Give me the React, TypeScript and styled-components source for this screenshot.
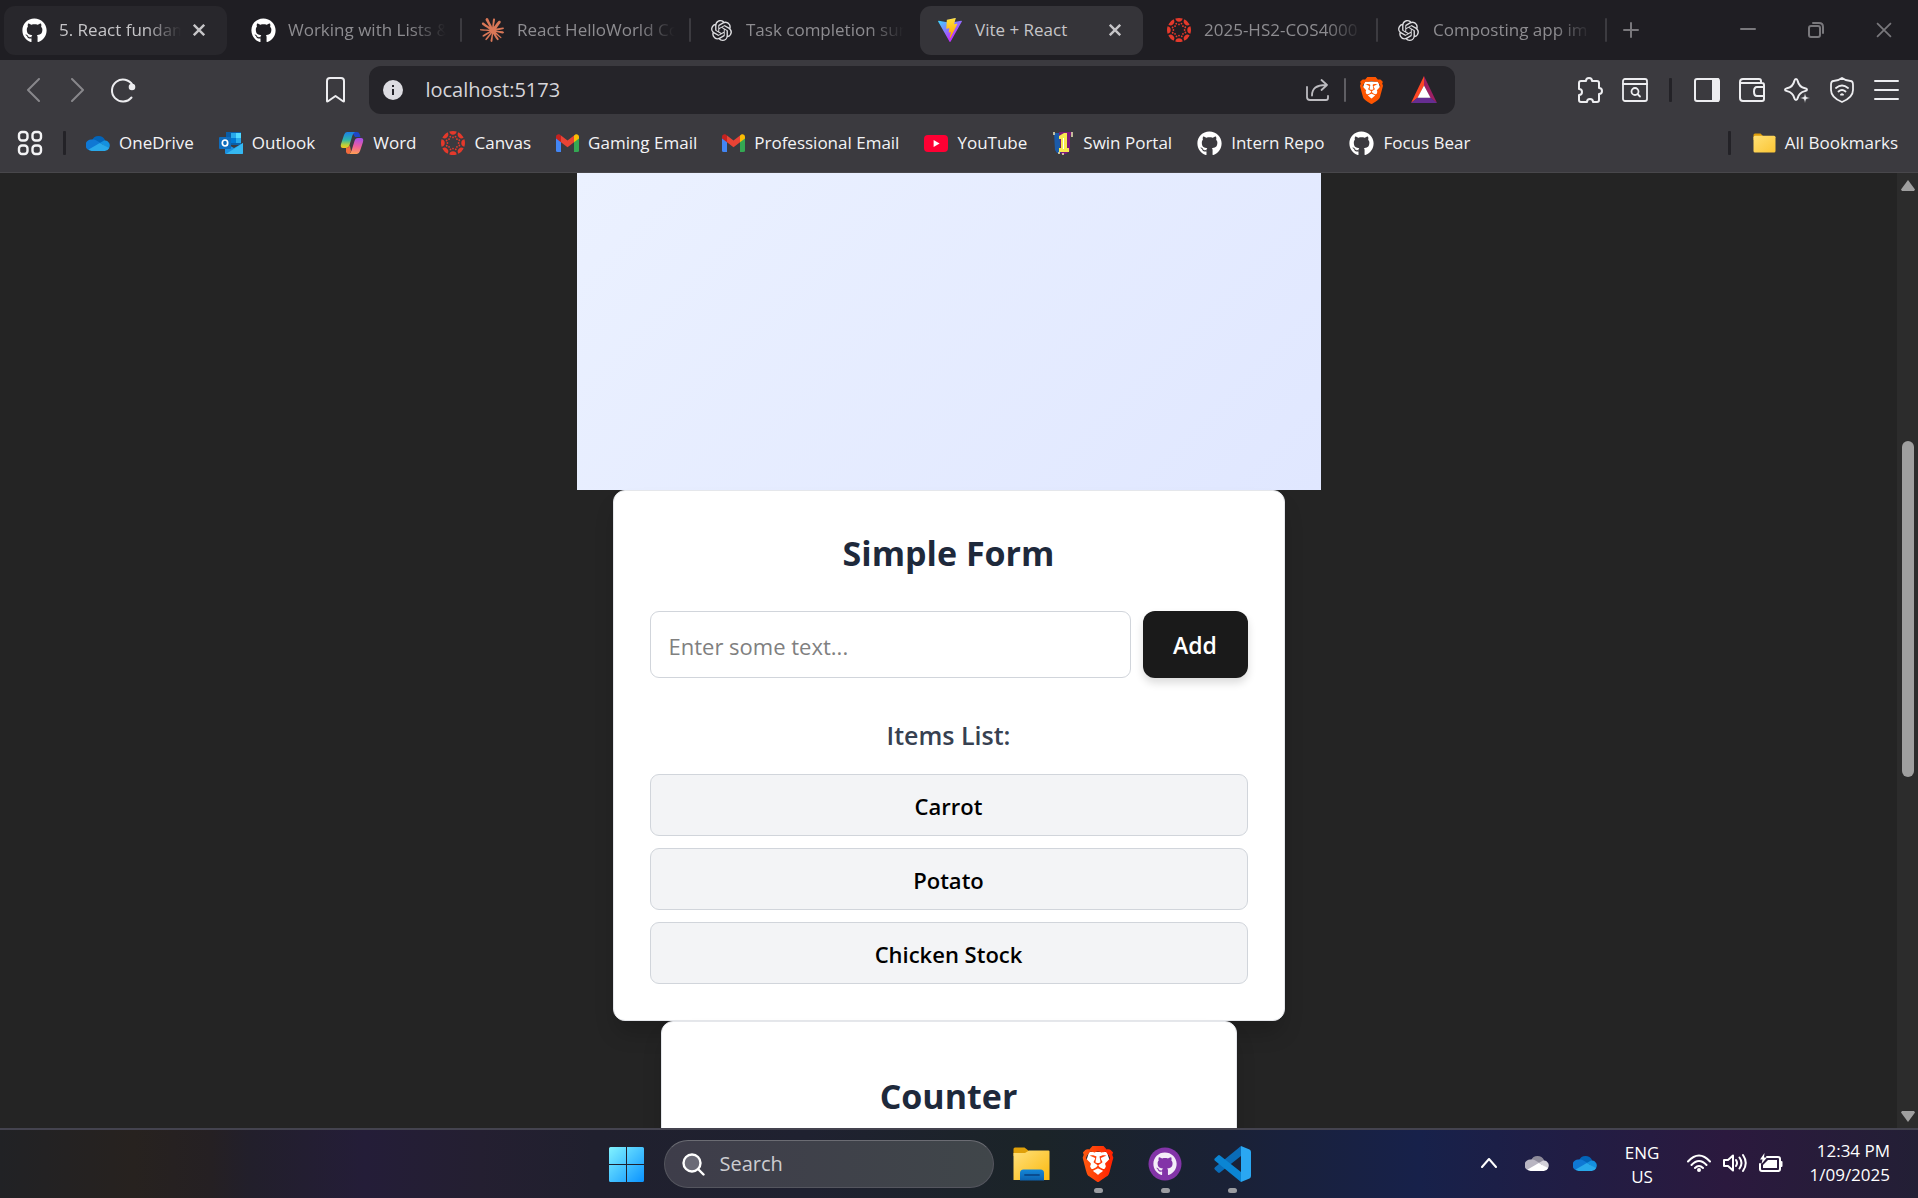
import React, { useState } from "react";
import styled, { createGlobalStyle, css } from "styled-components";
import { FaGithub } from "react-icons/fa";
import { SiBrave, SiClaude, SiOpenai } from "react-icons/si";

const ui = `"Open Sans", "Noto Sans", sans-serif`;

const GlobalStyle = createGlobalStyle`
  *, *::before, *::after { box-sizing: border-box; }
  html, body { margin: 0; height: 100%; }
  #root { height: 100%; }
  body { background: #242424; font-family: ${ui}; overflow: hidden; }
  button, input { font-family: inherit; }
  h1, h2, ul, p { margin: 0; padding: 0; }
  svg { display: block; flex: none; }
`;

/* ---------- layout ---------- */

const Screen = styled.div`
  display: flex;
  flex-direction: column;
  height: 100vh;
`;

const plainButton = css`
  display: flex;
  align-items: center;
  justify-content: center;
  padding: 0;
  border: 0;
  background: none;
  color: inherit;
`;

const TabStrip = styled.header`
  display: flex;
  flex: none;
  height: 60px;
  padding-left: 4px;
  background: #1f1e23;
  color: #79787c;
`;

const Tabs = styled.nav`
  display: flex;
  flex: 0 1 1603px;
  min-width: 0;
`;

const TabCell = styled.div`
  display: flex;
  flex: 1 1 0;
  align-items: center;
  gap: 4px;
  min-width: 0;
`;

const Pill = styled.div<{ $tone: "idle" | "hover" | "active" }>`
  display: flex;
  flex: 1;
  align-items: center;
  min-width: 0;
  height: 49px;
  padding: 0 10px 0 18px;
  border-radius: 11px;
  background: ${(p) => (p.$tone === "active" ? "#353439" : p.$tone === "hover" ? "#28272c" : "transparent")};
  color: ${(p) => (p.$tone === "idle" ? "#8d8c90" : "#c6c5c8")};
`;

const TabIcon = styled.span`
  display: flex;
  flex: none;
  justify-content: center;
  width: 24px;
`;

const TabTitle = styled.a<{ $fade: boolean }>`
  flex: 1;
  min-width: 0;
  margin-left: 13px;
  overflow: hidden;
  color: inherit;
  font-size: 17px;
  line-height: 26px;
  text-decoration: none;
  white-space: nowrap;
  ${(p) => p.$fade && css`mask-image: linear-gradient(to right, #000 calc(100% - 36px), transparent);`}
`;

const CloseTab = styled.button`
  ${plainButton}
  flex: none;
  width: 36px;
  height: 36px;
`;

const Divider = styled.span<{ $color: string; $width?: number }>`
  flex: none;
  width: ${(p) => p.$width ?? 2}px;
  height: 24px;
  border-radius: 1px;
  background: ${(p) => p.$color};
`;

const NewTab = styled.button`
  ${plainButton}
  width: 48px;
`;

const WindowControls = styled.div`
  display: flex;
  margin-left: auto;
`;

const WindowButton = styled.button`
  ${plainButton}
  width: 68px;
`;

const Toolbar = styled.div`
  display: flex;
  flex: none;
  align-items: center;
  height: 60px;
  padding: 0 9px 0 10px;
  background: #3b3a3f;
  color: #ededf0;
`;

const ToolButton = styled.button<{ $dim?: boolean }>`
  ${plainButton}
  flex: none;
  width: 45px;
  height: 45px;
  color: ${(p) => (p.$dim ? "#88878b" : "#ededf0")};
`;

const Stretch = styled.span<{ $grow: number }>`
  flex: ${(p) => p.$grow} 1 0;
`;

const ToolDivider = styled.span`
  display: flex;
  justify-content: center;
  width: 27px;
`;

const AddressBar = styled.form`
  display: flex;
  flex: 1083 1 0;
  align-items: center;
  min-width: 0;
  height: 48px;
  margin-left: 11px;
  padding: 0 5px 0 14px;
  border-radius: 12px;
  background: #252429;
`;

const AddressInput = styled.input`
  flex: 1;
  min-width: 0;
  margin-left: 22px;
  padding: 0;
  border: 0;
  outline: 0;
  background: none;
  color: #d6d5d9;
  font-size: 20px;
  line-height: 28px;
`;

const AddressButton = styled.button`
  ${plainButton}
  flex: none;
  width: 52px;
  height: 48px;
  color: #bdbcc0;
`;

const BookmarkBar = styled.nav`
  display: flex;
  flex: none;
  align-items: center;
  gap: 20px;
  height: 53px;
  padding: 0 20px 6px 17px;
  border-bottom: 1px solid #48474b;
  background: #3b3a3f;
  color: #f3f3f5;
`;

const BookmarkList = styled.div`
  display: flex;
  gap: 25px;
`;

const AppsButton = styled.button`
  ${plainButton}
  width: 26px;
  height: 26px;
`;

const Bookmark = styled.a`
  display: flex;
  align-items: center;
  gap: 9px;
  color: inherit;
  font-size: 17px;
  line-height: 26px;
  text-decoration: none;
  white-space: nowrap;
`;

const PushRight = styled.div`
  display: flex;
  align-items: center;
  gap: 22px;
  margin-left: auto;
`;

/* ---------- page ---------- */

const Viewport = styled.div`
  display: flex;
  flex: 1;
  min-height: 0;
  background: #242424;
`;

const Page = styled.main`
  display: flex;
  flex: 1;
  flex-direction: column;
  align-items: center;
  min-width: 0;
  overflow: hidden;
`;

const Hero = styled.section`
  flex: none;
  width: 100%;
  max-width: 744px;
  height: 317px;
  background: linear-gradient(135deg, #ebf1ff, #e0e7ff);
`;

const Card = styled.section<{ $max: number; $pad: number }>`
  flex: none;
  width: 100%;
  max-width: ${(p) => p.$max}px;
  padding: ${(p) => p.$pad}px 36px 36px;
  border: 1px solid #e5e7eb;
  border-radius: 12px;
  background: #fff;
  box-shadow: 0 15px 22px -4px rgba(0, 0, 0, 0.2);
  text-align: center;
`;

const CardTitle = styled.h1`
  padding-top: 4px;
  color: #1e293b;
  font-size: 34px;
  font-weight: 700;
  line-height: 44px;
`;

const EntryForm = styled.form`
  display: flex;
  gap: 12px;
  margin: 36px 0;
`;

const EntryInput = styled.input`
  flex: 1;
  min-width: 0;
  height: 67px;
  padding: 2px 18px 0;
  border: 1px solid #d1d5db;
  border-radius: 9px;
  outline: 0;
  background: #fff;
  color: #000;
  font-size: 22px;
  &::placeholder { color: #808080; opacity: 1; }
`;

const AddButton = styled.button`
  width: 105px;
  height: 67px;
  padding: 0;
  border: 0;
  border-radius: 12px;
  background: #1a1a1a;
  box-shadow: 0 5px 8px rgba(0, 0, 0, 0.14);
  color: #fff;
  font-size: 23px;
  font-weight: 600;
`;

const ListTitle = styled.h2`
  margin-bottom: 18px;
  color: #374151;
  font-size: 25px;
  font-weight: 600;
  line-height: 42px;
`;

const Items = styled.ul`
  display: flex;
  flex-direction: column;
  gap: 12px;
  list-style: none;
`;

const Item = styled.li`
  padding: 13px 12px 11px;
  border: 1px solid #d1d5db;
  border-radius: 9px;
  background: #f3f4f6;
  color: #000;
  font-size: 22px;
  font-weight: 600;
  line-height: 36px;
`;

const ScrollTrack = styled.div`
  display: flex;
  flex: none;
  flex-direction: column;
  align-items: center;
  width: 21px;
  background: #2c2c2c;
  color: #9f9f9f;
`;

const ScrollArrow = styled.button`
  ${plainButton}
  width: 21px;
  height: 24px;
`;

const Thumb = styled.span`
  flex: 337 1 0;
  width: 12px;
  border-radius: 6px;
  background: #9f9f9f;
`;

/* ---------- taskbar ---------- */

const Taskbar = styled.footer`
  display: grid;
  flex: none;
  grid-template-columns: 1fr auto 1fr;
  height: 70px;
  border-top: 2px solid #44434f;
  background: linear-gradient(
    to right,
    #212225 0%,
    #27221f 7%,
    #252023 11%,
    #221f2b 13%,
    #241d38 19%,
    #241f31 25%,
    #20202e 31%,
    #1f2130 42%,
    #1b2428 54%,
    #1a2136 64%,
    #17214a 74%,
    #2b193e 90%,
    #231f35 100%
  );
  color: #fff;
`;

const Dock = styled.div`
  display: flex;
  grid-column: 2;
  align-items: center;
  padding-right: 60px;
`;

const DockButton = styled.button<{ $open?: boolean }>`
  ${plainButton}
  position: relative;
  width: 67px;
  height: 68px;
  ${(p) =>
    p.$open &&
    css`
      &::after {
        content: "";
        position: absolute;
        bottom: 5px;
        width: 9px;
        height: 5px;
        border-radius: 3px;
        background: #9b9ca1;
      }
    `}
`;

const SearchBox = styled.label`
  display: flex;
  align-items: center;
  gap: 15px;
  width: 330px;
  height: 48px;
  margin: 0 4px;
  padding: 0 17px;
  border: 1px solid #55565f;
  border-top-color: #6b6c73;
  border-radius: 24px;
  background: linear-gradient(to right, #3e3d4a, #40464a);
`;

const SearchInput = styled.input`
  flex: 1;
  min-width: 0;
  padding: 0;
  border: 0;
  outline: 0;
  background: none;
  color: #fff;
  font-size: 20px;
  line-height: 28px;
  &::placeholder { color: #cccdd1; opacity: 1; }
`;

const Tray = styled.div`
  display: flex;
  align-items: center;
  justify-content: flex-end;
  padding: 0 28px 2px 0;
  font-size: 17px;
  line-height: 24px;
`;

const TrayButton = styled.button<{ $width: number }>`
  ${plainButton}
  width: ${(p) => p.$width}px;
  height: 48px;
`;

const Language = styled.div`
  width: 72px;
  padding: 3px 6px 0 0;
  text-align: center;
`;

const Clock = styled.time`
  width: 101px;
  text-align: right;
`;

/* ---------- drawings ---------- */

const Close = ({ size = 12, weight = 2.4 }) => (
  <svg width={size} height={size} viewBox="0 0 12 12" fill="none" stroke="currentColor" strokeWidth={weight}>
    <path d="M.8.8l10.4 10.4M11.2.8L.8 11.2" />
  </svg>
);

const ViteLogo = () => (
  <svg width="24" height="24" viewBox="0 0 256 257">
    <defs>
      <linearGradient id="va" x1="-.8%" x2="57.6%" y1="7.7%" y2="78.4%">
        <stop offset="0%" stopColor="#41D1FF" />
        <stop offset="100%" stopColor="#BD34FE" />
      </linearGradient>
      <linearGradient id="vb" x1="43.4%" x2="50.3%" y1="2.2%" y2="89%">
        <stop offset="0%" stopColor="#FFEA83" />
        <stop offset="8.3%" stopColor="#FFDD35" />
        <stop offset="100%" stopColor="#FFA800" />
      </linearGradient>
    </defs>
    <path fill="url(#va)" d="M255.153 37.938L134.897 252.976c-2.483 4.44-8.862 4.466-11.382.048L.875 37.958c-2.746-4.814 1.371-10.646 6.827-9.67l120.385 21.517a6.537 6.537 0 0 0 2.322-.004l117.867-21.483c5.438-.991 9.574 4.796 6.877 9.62Z" />
    <path fill="url(#vb)" d="M185.432.063L96.44 17.501a3.268 3.268 0 0 0-2.634 3.014l-5.474 92.456a3.268 3.268 0 0 0 3.997 3.378l24.777-5.718c2.318-.535 4.413 1.507 3.936 3.838l-7.361 36.047c-.495 2.426 1.782 4.5 4.151 3.78l15.304-4.649c2.372-.72 4.652 1.36 4.15 3.788l-11.698 56.621c-.732 3.542 3.979 5.473 5.943 2.437l1.313-2.028l72.516-144.72c1.215-2.423-.88-5.186-3.54-4.672l-25.505 4.922c-2.396.462-4.435-1.77-3.759-4.114l16.646-57.705c.677-2.35-1.37-4.583-3.769-4.113Z" />
  </svg>
);

const CanvasLogo = () => (
  <svg width="24" height="24" viewBox="0 0 24 24" fill="#e4392b">
    {[0, 45, 90, 135, 180, 225, 270, 315].map((a) => (
      <g key={a} transform={`rotate(${a} 12 12)`}>
        <path d="M8.300.6A12 12 0 0 1 15.700.6A3.750 3.750 0 0 1 8.300.6Z" />
        <circle cx="12" cy="6.400" r=".9" />
        <circle cx="14.500" cy="5.600" r=".9" />
      </g>
    ))}
  </svg>
);

const Cloud = ({ back, left, right, front }: { back: string; left: string; right: string; front: string }) => (
  <svg width="24" height="16" viewBox="0 0 24 16">
    <path fill={back} d="M6 5.2A7.2 7.2 0 0 1 19 5l-5 5z" />
    <path fill={left} d="M6.2 4.6a5.6 5.6 0 0 1 4.2.8l5 3L4 15.500A5.500 5.500 0 0 1 6.200 4.600z" />
    <path fill={right} d="M18.500 5.200A5.300 5.300 0 0 1 22.800 13.500l-9-5.600z" />
    <path fill={front} d="M2.600 14.600L13.800 8l9.400 5A5 5 0 0 1 18.800 16H5.600a5 5 0 0 1-3-1.400z" />
  </svg>
);

const BlueCloud = () => <Cloud back="#0364b8" left="#0f78d4" right="#1490df" front="#28a8ea" />;
const GreyCloud = () => <Cloud back="#8d8a99" left="#b9b6c2" right="#d3d1d9" front="#ffffff" />;

const OutlookLogo = () => (
  <svg width="24" height="22" viewBox="0 0 24 22">
    <rect x="7" y="0" width="15" height="13" fill="#0a5ea8" />
    <rect x="12" y="1" width="5" height="5" fill="#28a8ea" />
    <rect x="17" y="1" width="5" height="5" fill="#50d9ff" />
    <rect x="12" y="6" width="5" height="5" fill="#0078d4" />
    <rect x="17" y="6" width="5" height="5" fill="#28a8ea" />
    <path d="M6 11l9 5 9-5v10a1 1 0 0 1-1 1H7a1 1 0 0 1-1-1z" fill="#1a8fe0" />
    <path d="M24 11L7 22h16a1 1 0 0 0 1-1z" fill="#35b8f1" />
    <rect x="0" y="5" width="12" height="12" rx="1" fill="#0f6cbd" />
    <ellipse cx="6" cy="11" rx="2.700" ry="3" fill="none" stroke="#fff" strokeWidth="1.700" />
  </svg>
);

const CopilotLogo = () => (
  <svg width="24" height="22" viewBox="0 0 24 22">
    <defs>
      <linearGradient id="ca" x1="0" y1="0" x2="0" y2="1">
        <stop offset="0" stopColor="#1a7fe8" />
        <stop offset=".5" stopColor="#2fb6a8" />
        <stop offset=".8" stopColor="#b9cf3a" />
        <stop offset="1" stopColor="#f4c520" />
      </linearGradient>
      <linearGradient id="cb" x1=".4" y1="0" x2=".3" y2="1">
        <stop offset="0" stopColor="#a94fe8" />
        <stop offset=".5" stopColor="#ee5f9c" />
        <stop offset="1" stopColor="#ffa052" />
      </linearGradient>
    </defs>
    <path d="M12 0h5q2 0 2.600 2L20.500 5H15z" fill="#1e46c8" />
    <path d="M7 0H15q-2 1-2.600 3.500L9.500 13Q8.800 16 6 16H3Q0 16 1 12L4 3Q5 0 7 0z" fill="url(#ca)" />
    <path d="M6 16q3 0 3.800-3L11 19q-.6 3-2.500 3Q6.500 22 6 20z" fill="#f26a3c" />
    <path d="M17 22H8.800q2-.8 2.800-3.500L14.500 9Q15.300 6 18 6h3q3 0 2 4l-3 9q-1 3-3 3z" fill="url(#cb)" />
  </svg>
);

const GmailLogo = () => (
  <svg width="23" height="18" viewBox="0 0 23 18">
    <path d="M0 3v13.500Q0 18 1.500 18H5V7z" fill="#4285f4" />
    <path d="M23 3v13.500q0 1.500-1.500 1.500H18V7z" fill="#34a853" />
    <path d="M5 1.500V8.200l6.500 5 6.500-5V1.500l-6.500 5z" fill="#ea4335" />
    <path d="M0 3v1.600l5 3.600V1.500L4 .700C2.400-.500 0 .600 0 3z" fill="#c5221f" />
    <path d="M23 3v1.600l-5 3.600V1.500l1-.8c1.600-1.200 4-.1 4 2.300z" fill="#fbbc04" />
  </svg>
);

const YouTubeLogo = () => (
  <svg width="24" height="17" viewBox="0 0 24 17">
    <rect width="24" height="17" rx="4" fill="#ff0033" />
    <path d="M9.600 5l6 3.500-6 3.500z" fill="#fff" />
  </svg>
);

const SwinLogo = () => (
  <svg width="22" height="24" viewBox="0 0 20 24">
    <path d="M1 2h6v18l2 2H4l-2-3z" fill="#1b5ba8" />
    <path d="M6 1h13l-2 5v14l-4 3H8z" fill="#7d1a7c" />
    <path d="M6 5l5-3h3v15h2v4H6v-4h2V8H6z" fill="#f9e94e" />
    <path d="M10 7h1v11h-1z" fill="#fff" />
    <path d="M1 1v3M19 1v5M5 22h2M9 23h2" stroke="#efe6b8" strokeWidth="1.500" />
  </svg>
);

const FolderIcon = () => (
  <svg width="23" height="20" viewBox="0 0 23 20">
    <defs>
      <linearGradient id="fd" x1="0" y1="0" x2="1" y2="1">
        <stop offset="0" stopColor="#ffe074" />
        <stop offset="1" stopColor="#fbc534" />
      </linearGradient>
    </defs>
    <path d="M.5 2Q.5.500 2 .500h5.500L10 3v4H.5z" fill="#dd9c0a" />
    <rect x=".5" y="2.800" width="22" height="16.700" rx="1.500" fill="url(#fd)" />
  </svg>
);

const BraveLogo = ({ size, from, to }: { size: number; from: string; to: string }) => (
  <svg width={size} height={size} viewBox="0 0 24 24">
    <defs>
      <linearGradient id={`br${size}`}>
        <stop offset="0" stopColor={from} />
        <stop offset="1" stopColor={to} />
      </linearGradient>
    </defs>
    <path d="M6 4h12l1.500 5L16 17l-4 4-4-4-3.500-8z" fill="#fff" />
    <SiBrave size={24} fill={`url(#br${size})`} />
  </svg>
);

const BatLogo = () => (
  <svg width="26" height="28" viewBox="0 0 26 28">
    <path d="M13 0L0 27l6.500-5L13 9.500z" fill="#ff4724" />
    <path d="M13 0l13 27-6.500-5L13 9.500z" fill="#9e1f63" />
    <path d="M0 27h26l-6.500-5.500h-13z" fill="#662d91" />
    <path d="M13 9.500l6.500 12.300h-13z" fill="#fff" />
  </svg>
);

const Stroke = ({ w = 26, h = 26, sw = 2, children }: { w?: number; h?: number; sw?: number; children: React.ReactNode }) => (
  <svg width={w} height={h} viewBox={`0 0 ${w} ${h}`} fill="none" stroke="currentColor" strokeWidth={sw} strokeLinecap="round" strokeLinejoin="round">
    {children}
  </svg>
);

const WindowsLogo = () => (
  <svg width="35" height="35" viewBox="0 0 35 35">
    <defs>
      <linearGradient id="wn" gradientUnits="userSpaceOnUse" x1="0" y1="0" x2="35" y2="35">
        <stop offset="0" stopColor="#82f3ff" />
        <stop offset="1" stopColor="#0a93ff" />
      </linearGradient>
    </defs>
    <path fill="url(#wn)" d="M1.500 0H17v17H0V1.500Q0 0 1.500 0zM18 0h15.500Q35 0 35 1.500V17H18zM0 18h17v17H1.500Q0 35 0 33.500zM18 18h17v15.500q0 1.500-1.500 1.500H18z" />
  </svg>
);

const ExplorerLogo = () => (
  <svg width="37" height="34" viewBox="0 0 37 34">
    <defs>
      <linearGradient id="ex" x1="0" y1="0" x2="1" y2="1">
        <stop offset="0" stopColor="#ffe07a" />
        <stop offset="1" stopColor="#fbb90f" />
      </linearGradient>
      <linearGradient id="ey" x1="0" y1="0" x2="0" y2="1">
        <stop offset="0" stopColor="#1487d8" />
        <stop offset="1" stopColor="#0c63b0" />
      </linearGradient>
    </defs>
    <path d="M.5 2Q.5.500 2 .500h9.500L16 4v5H.5z" fill="#e0a008" />
    <path d="M.5 6H12l4-2.500h19.500q1 0 1 1V33H.5z" fill="url(#ex)" />
    <path d="M7 33.500V26q0-3.500 3.500-3.500h17Q31 22.500 31 26v7.500z" fill="url(#ey)" />
    <path d="M12 28h14" stroke="#0a4c8f" strokeWidth="1.800" strokeLinecap="round" />
  </svg>
);

const GitHubDesktopLogo = () => (
  <svg width="34" height="34" viewBox="0 0 34 34">
    <circle cx="17" cy="17" r="16.500" fill="#8334a8" />
    <g transform="translate(5 5)" color="#f4edf8">
      <FaGithub size={24} />
    </g>
  </svg>
);

const CodeLogo = () => (
  <svg width="37" height="36" viewBox="0 0 37 36">
    <path d="M27 0v10L6 26.500q-1 .8-2 0L1 23.800q-1.300-1.200 0-2.500z" fill="#0a6cb8" />
    <path d="M27 36V26L6 9.500q-1-.8-2 0L1 12.200q-1.300 1.200 0 2.500z" fill="#0b85d3" />
    <path d="M27 0l8.500 3.600Q37 4.300 37 6v24q0 1.700-1.500 2.400L27 36z" fill="#2aa7f2" />
  </svg>
);

/* ---------- data ---------- */

type TabInfo = { title: string; icon: React.ReactNode; tone?: "idle" | "hover" | "active"; divider?: boolean };

const github = <FaGithub size={25} color="#fff" />;
const openai = <SiOpenai size={21} color="#dddde0" />;

const tabs: TabInfo[] = [
  { title: "5. React fundam", icon: github, tone: "hover" },
  { title: "Working with Lists &", icon: github, divider: true },
  { title: "React HelloWorld Co", icon: <SiClaude size={24} color="#d97757" />, divider: true },
  { title: "Task completion sum", icon: openai },
  { title: "Vite + React", icon: <ViteLogo />, tone: "active" },
  { title: "2025-HS2-COS4000", icon: <CanvasLogo />, divider: true },
  { title: "Composting app im", icon: openai, divider: true },
];

const bookmarks: [string, React.ReactNode][] = [
  ["OneDrive", <BlueCloud />],
  ["Outlook", <OutlookLogo />],
  ["Word", <CopilotLogo />],
  ["Canvas", <CanvasLogo />],
  ["Gaming Email", <GmailLogo />],
  ["Professional Email", <GmailLogo />],
  ["YouTube", <YouTubeLogo />],
  ["Swin Portal", <SwinLogo />],
  ["Intern Repo", github],
  ["Focus Bear", github],
];

export default function App() {
  const [items, setItems] = useState(["Carrot", "Potato", "Chicken Stock"]);
  const [draft, setDraft] = useState("");

  const addItem = (e: React.FormEvent) => {
    e.preventDefault();
    if (!draft.trim()) return;
    setItems([...items, draft.trim()]);
    setDraft("");
  };

  return (
    <Screen>
      <GlobalStyle />
      <TabStrip>
        <Tabs aria-label="Open tabs">
          {tabs.map((t) => {
            const tone = t.tone ?? "idle";
            return (
              <TabCell key={t.title}>
                <Pill $tone={tone}>
                  <TabIcon>{t.icon}</TabIcon>
                  <TabTitle href="#" $fade={tone !== "active"}>{t.title}</TabTitle>
                  {tone !== "idle" && <CloseTab aria-label="Close tab"><Close /></CloseTab>}
                </Pill>
                <Divider $color={t.divider ? "#3c3b40" : "transparent"} />
              </TabCell>
            );
          })}
        </Tabs>
        <NewTab aria-label="New tab">
          <Stroke w={16} h={16}><path d="M8 1v14M1 8h14" /></Stroke>
        </NewTab>
        <WindowControls>
          <WindowButton aria-label="Minimise"><Stroke w={16} h={16}><path d="M1 7h14" /></Stroke></WindowButton>
          <WindowButton aria-label="Restore">
            <Stroke w={16} h={16}><rect x="1" y="4" width="11" height="11" rx="2" /><path d="M5 1h6q4 0 4 4v6" /></Stroke>
          </WindowButton>
          <WindowButton aria-label="Close window"><Close size={16} weight={1.3} /></WindowButton>
        </WindowControls>
      </TabStrip>

      <Toolbar>
        <ToolButton $dim aria-label="Back"><Stroke w={14} h={24}><path d="M13 1L2 12l11 11" /></Stroke></ToolButton>
        <ToolButton $dim aria-label="Forward"><Stroke w={14} h={24}><path d="M1 1l11 11L1 23" /></Stroke></ToolButton>
        <ToolButton aria-label="Reload">
          <Stroke><path d="M21.500 20.500A11 11 0 1 1 22.500 8" /><circle cx="22" cy="10" r="2.300" fill="currentColor" /></Stroke>
        </ToolButton>
        <Stretch $grow={171} />
        <ToolButton aria-label="Bookmark this page">
          <Stroke w={19} h={26}><path d="M1 4Q1 1 4 1h11q3 0 3 3v20q0 1-1 .3L9.500 19 2 24.300Q1 25 1 24z" /></Stroke>
        </ToolButton>
        <AddressBar onSubmit={(e) => e.preventDefault()}>
          <svg width="20" height="20" viewBox="0 0 20 20">
            <circle cx="10" cy="10" r="10" fill="#dddce1" />
            <path d="M10 9v6M10 5v2" stroke="#252429" strokeWidth="2" />
          </svg>
          <AddressInput aria-label="Address" defaultValue="localhost:5173" />
          <AddressButton type="button" aria-label="Share">
            <Stroke w={24} h={24} sw={1.8}><path d="M1 9v10q0 3 3 3h16q2 0 2-2v-2M6 17.500Q6 7 20 7M15.500 2L21 7l-5.500 5" /></Stroke>
          </AddressButton>
          <Divider $color="#5f5e63" />
          <AddressButton type="button" aria-label="Brave Shields"><BraveLogo size={27} from="#ff5500" to="#ff5500" /></AddressButton>
          <AddressButton type="button" aria-label="Brave Rewards"><BatLogo /></AddressButton>
        </AddressBar>
        <Stretch $grow={114} />
        <ToolButton aria-label="Extensions">
          <Stroke><path d="M9 4Q9 1 12 1t3 3h5q2 0 2 2v5q3 0 3 3t-3 3v6q0 2-2 2h-4q0-3-3-3t-3 3H4q-2 0-2-2v-5q3 0 3-3t-3-3V6q0-2 2-2z" /></Stroke>
        </ToolButton>
        <ToolButton aria-label="Search tabs">
          <Stroke h={24} sw={1.8}><rect x="1" y="1" width="24" height="22" rx="2" /><path d="M1 6h24" /><circle cx="13" cy="13.500" r="3.500" /><path d="M15.500 16l2.500 2.500" /></Stroke>
        </ToolButton>
        <ToolDivider><Divider $color="#232227" $width={3} /></ToolDivider>
        <ToolButton aria-label="Sidebar">
          <Stroke h={24}><rect x="1" y="1" width="24" height="22" rx="2" /><path d="M19 1h5v22h-5z" fill="currentColor" /></Stroke>
        </ToolButton>
        <ToolButton aria-label="Wallet">
          <Stroke h={24}><path d="M25 9V7q0-2-2-2H1M22 5V3q0-2-2-2H4Q1 1 1 4v16q0 3 3 3h19q2 0 2-2v-3M25 9h-7q-3 0-3 4.500T18 18h7z" /></Stroke>
        </ToolButton>
        <ToolButton aria-label="Leo AI">
          <Stroke><path d="M12 2q1.200 0 1.700 2 1.300 6 7.300 7.300 2 .4 2 1.400t-2 1.400Q15 15.500 13.700 21q-.5 2-1.700 2t-1.700-2Q9 15.500 3 14.100q-2-.4-2-1.400t2-1.400Q9 10 10.300 4 10.800 2 12 2z" /><path d="M21 16l1.200 3.800L26 21l-3.800 1.200L21 26l-1.200-3.800L16 21l3.800-1.200z" fill="currentColor" stroke="#3b3a3f" strokeWidth=".5" /></Stroke>
        </ToolButton>
        <ToolButton aria-label="VPN">
          <Stroke w={24} h={26} sw={1.8}><path d="M12 1q4 3 8.500 3Q23 4 23 8v5q0 7.500-11 12Q1 20.500 1 13V8q0-4 2.500-4Q8 4 12 1zM6 11q6-5 12 0M8.500 14.500q3.500-3 7 0M11 17.700q1-.8 2 0" /></Stroke>
        </ToolButton>
        <ToolButton aria-label="Menu"><Stroke w={25} h={22}><path d="M1 2h23M1 11h23M1 20h23" /></Stroke></ToolButton>
      </Toolbar>

      <BookmarkBar aria-label="Bookmarks">
        <AppsButton aria-label="Apps">
          <Stroke sw={2.4}><rect x="2" y="2" width="8.500" height="8.500" rx="3" /><rect x="15.500" y="2" width="8.500" height="8.500" rx="3" /><rect x="2" y="15.500" width="8.500" height="8.500" rx="3" /><rect x="15.500" y="15.500" width="8.500" height="8.500" rx="3" /></Stroke>
        </AppsButton>
        <Divider $color="#232227" $width={3} />
        <BookmarkList>
          {bookmarks.map(([label, icon]) => (
            <Bookmark key={label} href="#">{icon}{label}</Bookmark>
          ))}
        </BookmarkList>
        <PushRight>
          <Divider $color="#232227" $width={3} />
          <Bookmark href="#"><FolderIcon />All Bookmarks</Bookmark>
        </PushRight>
      </BookmarkBar>

      <Viewport>
        <Page>
          <Hero />
          <Card $max={672} $pad={36}>
            <CardTitle>Simple Form</CardTitle>
            <EntryForm onSubmit={addItem}>
              <EntryInput aria-label="Item text" placeholder="Enter some text..." value={draft} onChange={(e) => setDraft(e.target.value)} />
              <AddButton type="submit">Add</AddButton>
            </EntryForm>
            <ListTitle>Items List:</ListTitle>
            <Items>
              {items.map((item) => <Item key={item}>{item}</Item>)}
            </Items>
          </Card>
          <Card $max={576} $pad={48}>
            <CardTitle>Counter</CardTitle>
          </Card>
        </Page>
        <ScrollTrack>
          <ScrollArrow aria-label="Scroll up"><svg width="14" height="11" viewBox="0 0 14 11"><path d="M7 0l7 9.500-1 1.500H1L0 9.500z" fill="currentColor" /></svg></ScrollArrow>
          <Stretch $grow={244} />
          <Thumb />
          <Stretch $grow={327} />
          <ScrollArrow aria-label="Scroll down"><svg width="14" height="11" viewBox="0 0 14 11"><path d="M7 11l7-9.500L13 0H1L0 1.500z" fill="currentColor" /></svg></ScrollArrow>
        </ScrollTrack>
      </Viewport>

      <Taskbar>
        <Dock>
          <DockButton aria-label="Start"><WindowsLogo /></DockButton>
          <SearchBox>
            <Stroke w={23} h={23} sw={2.4}><circle cx="10" cy="10" r="8.500" fill="#6b6b77" /><path d="M16 16l5.500 5.500" /></Stroke>
            <SearchInput aria-label="Search" placeholder="Search" />
          </SearchBox>
          <DockButton aria-label="File Explorer"><ExplorerLogo /></DockButton>
          <DockButton $open aria-label="Brave"><BraveLogo size={36} from="#ff5a10" to="#ff2000" /></DockButton>
          <DockButton $open aria-label="GitHub Desktop"><GitHubDesktopLogo /></DockButton>
          <DockButton $open aria-label="Visual Studio Code"><CodeLogo /></DockButton>
        </Dock>
        <Tray>
          <TrayButton $width={48} aria-label="Show hidden icons"><Stroke w={16} h={10}><path d="M1 9l7-8 7 8" /></Stroke></TrayButton>
          <TrayButton $width={48} aria-label="OneDrive personal"><GreyCloud /></TrayButton>
          <TrayButton $width={48} aria-label="OneDrive"><BlueCloud /></TrayButton>
          <Language>ENG<br />US</Language>
          <TrayButton $width={36} aria-label="Wi-Fi">
            <Stroke w={24} h={18}><path d="M1 7.500q11-12 22 0M4.500 11q7.500-8 15 0M8 14q4-4 8 0" /><circle cx="12" cy="16" r="1" fill="currentColor" /></Stroke>
          </TrayButton>
          <TrayButton $width={36} aria-label="Volume">
            <Stroke w={24} h={20}><path d="M1 7v6h4l5 4.500V2.500L5 7zM13 7q2 3 0 6M16.500 4.500q4 5.500 0 11M20 2q5.500 8 0 16" /></Stroke>
          </TrayButton>
          <TrayButton $width={36} aria-label="Battery">
            <Stroke w={24} h={20}><path d="M8 4h11q2 0 2 2v10q0 2-2 2H3q-2 0-2-2v-5M22.500 9v4" /><path d="M9 7h9v8H4v-3z" fill="currentColor" stroke="none" /><path d="M5.500 0L1 6.500h2.500L2.500 11 8 4.500H5z" fill="currentColor" stroke="none" /></Stroke>
          </TrayButton>
          <Clock dateTime="2025-09-01T12:34">12:34 PM<br />1/09/2025</Clock>
        </Tray>
      </Taskbar>
    </Screen>
  );
}
